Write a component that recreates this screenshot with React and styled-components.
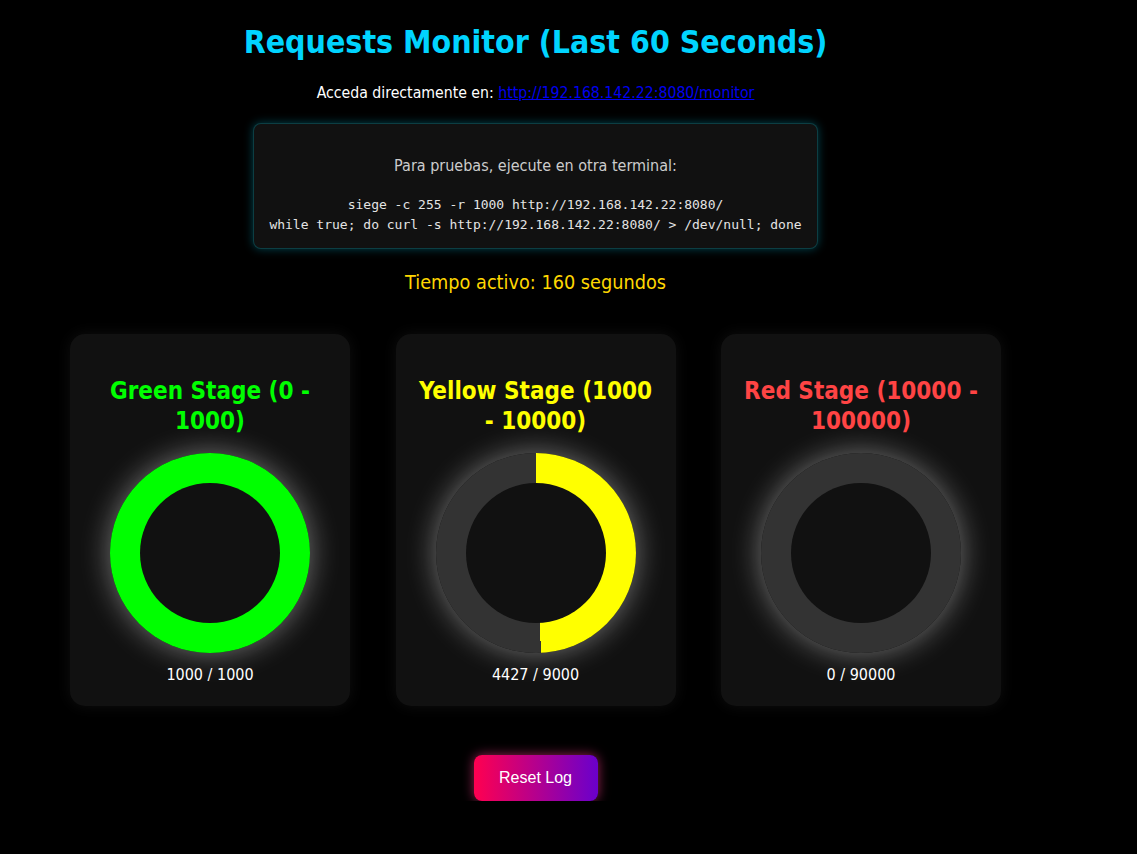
import React from "react";
import styled, { createGlobalStyle } from "styled-components";

const GlobalStyle = createGlobalStyle`
  html, body {
    margin: 0;
    padding: 0;
    background: #000;
  }
  body {
    font-family: "DejaVu Sans Condensed", "DejaVu Sans", sans-serif;
    color: #fff;
  }
`;

const stages = [
  { title: "Green Stage (0 - 1000)", color: "#00ff00", value: 1000, max: 1000 },
  { title: "Yellow Stage (1000 - 10000)", color: "#ffff00", value: 4427, max: 9000 },
  { title: "Red Stage (10000 - 100000)", color: "#ff4444", value: 0, max: 90000 },
];

const Page = styled.div`
  width: 1071px;
  display: flex;
  flex-direction: column;
  align-items: center;
  text-align: center;
  padding-top: 22px;
`;

const Title = styled.h1`
  margin: 0;
  font-size: 31.8px;
  line-height: 40px;
  font-weight: bold;
  color: #00d4ff;
`;

const LinkLine = styled.p`
  margin: 21px 0 0;
  font-size: 15.7px;
  line-height: 20px;
  a {
    color: #0000ee;
  }
`;

const InfoBox = styled.div`
  margin-top: 20px;
  width: 565px;
  height: 126px;
  box-sizing: border-box;
  padding-top: 32px;
  background: #111;
  border: 1px solid rgba(0, 200, 220, 0.25);
  border-radius: 8px;
  box-shadow: 0 0 10px rgba(0, 220, 255, 0.3);
  color: #ccc;
`;

const InfoText = styled.p`
  margin: 0 0 19px;
  font-size: 16px;
  line-height: 20px;
`;

const Code = styled.div`
  font-family: "DejaVu Sans Mono", monospace;
  font-size: 13px;
  line-height: 20px;
  color: #e4e4e4;
`;

const Uptime = styled.p`
  margin: 22px 0 0;
  font-size: 19.7px;
  line-height: 24px;
  color: #ffd700;
`;

const CardRow = styled.div`
  margin-top: 39px;
  display: flex;
  justify-content: center;
  gap: 45.5px;
`;

const Card = styled.div`
  width: 280px;
  height: 372px;
  box-sizing: border-box;
  padding: 42px 20px 0;
  background: #111;
  border-radius: 15px;
  box-shadow: 0 0 15px rgba(255, 255, 255, 0.06);
  display: flex;
  flex-direction: column;
  align-items: center;
`;

const StageTitle = styled.h2`
  margin: 0;
  font-size: 24px;
  line-height: 30px;
  font-weight: bold;
  color: ${(p) => p.color};
`;

const Ring = styled.div`
  margin-top: 17px;
  width: 200px;
  height: 200px;
  border-radius: 50%;
  display: flex;
  align-items: center;
  justify-content: center;
  box-shadow: 0 0 30px rgba(255, 255, 255, 0.42);
`;

const RingHole = styled.div`
  width: 140px;
  height: 140px;
  border-radius: 50%;
  background: #111;
`;

const Count = styled.p`
  margin: 13px 0 0;
  font-size: 16px;
  line-height: 18px;
  color: #fff;
`;

const ResetButton = styled.button`
  margin-top: 49px;
  width: 124px;
  height: 46px;
  border: none;
  border-radius: 8px;
  background: linear-gradient(90deg, #ff0050, #6a00cc);
  color: #fff;
  font-family: "Liberation Sans", Arial, sans-serif;
  font-size: 16px;
  box-shadow: 0 0 12px rgba(255, 60, 140, 0.6);
  cursor: pointer;
`;

const StageCard = ({ title, color, value, max }) => {
  const pct = Math.min(100, (value / max) * 100);
  return (
    <Card>
      <StageTitle color={color}>{title}</StageTitle>
      <Ring
        style={{
          background: `conic-gradient(${color} 0% ${pct}%, #333 ${pct}% 100%)`,
        }}
      >
        <RingHole />
      </Ring>
      <Count>
        {value} / {max}
      </Count>
    </Card>
  );
};

export default function App() {
  return (
    <>
      <GlobalStyle />
      <Page>
        <Title>Requests Monitor (Last 60 Seconds)</Title>
        <LinkLine>
          Acceda directamente en:{" "}
          <a href="#monitor">http://192.168.142.22:8080/monitor</a>
        </LinkLine>
        <InfoBox>
          <InfoText>Para pruebas, ejecute en otra terminal:</InfoText>
          <Code>siege -c 255 -r 1000 http://192.168.142.22:8080/</Code>
          <Code>
            while true; do curl -s http://192.168.142.22:8080/ &gt; /dev/null; done
          </Code>
        </InfoBox>
        <Uptime>Tiempo activo: 160 segundos</Uptime>
        <CardRow>
          {stages.map((s) => (
            <StageCard key={s.title} {...s} />
          ))}
        </CardRow>
        <ResetButton>Reset Log</ResetButton>
      </Page>
    </>
  );
}
